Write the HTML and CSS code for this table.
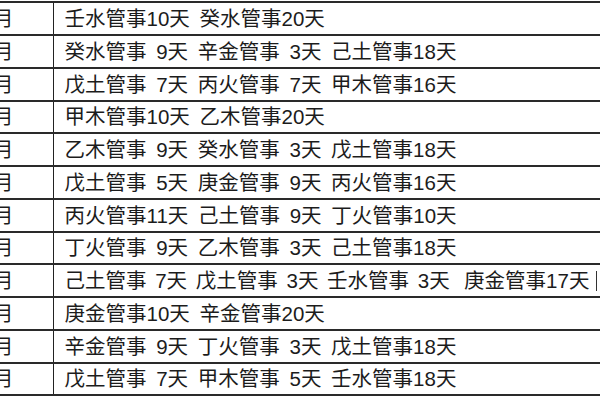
FILE: index.html
```html
<!DOCTYPE html>
<html lang="zh">
<head>
<meta charset="utf-8">
<link rel="stylesheet" href="styles.css">
</head>
<body>
<table class="grid">
  <tr class="r33"><td class="m">子月</td><td class="d">壬水管事10天 癸水管事20天</td></tr>
  <tr class="r33"><td class="m">丑月</td><td class="d">癸水管事 9天 辛金管事 3天 己土管事18天</td></tr>
  <tr class="r33"><td class="m">寅月</td><td class="d">戊土管事 7天 丙火管事 7天 甲木管事16天</td></tr>
  <tr class="r32"><td class="m">卯月</td><td class="d">甲木管事10天 乙木管事20天</td></tr>
  <tr class="r33"><td class="m">辰月</td><td class="d">乙木管事 9天 癸水管事 3天 戊土管事18天</td></tr>
  <tr class="r33"><td class="m">巳月</td><td class="d">戊土管事 5天 庚金管事 9天 丙火管事16天</td></tr>
  <tr class="r33"><td class="m">午月</td><td class="d">丙火管事11天 己土管事 9天 丁火管事10天</td></tr>
  <tr class="r32"><td class="m">未月</td><td class="d">丁火管事 9天 乙木管事 3天 己土管事18天</td></tr>
  <tr class="r33"><td class="m">申月</td><td class="d tight">己土管事 7天 戊土管事 3天 壬水管事 3天&nbsp; <span class="last">庚金管事17天</span></td></tr>
  <tr class="r33"><td class="m">酉月</td><td class="d">庚金管事10天 辛金管事20天</td></tr>
  <tr class="r33"><td class="m">戌月</td><td class="d">辛金管事 9天 丁火管事 3天 戊土管事18天</td></tr>
  <tr class="r32"><td class="m">亥月</td><td class="d">戊土管事 7天 甲木管事 5天 壬水管事18天</td></tr>
</table>
</body>
</html>
```
FILE: styles.css
```css
html, body {
  margin: 0;
  padding: 0;
  background: #ffffff;
  overflow: hidden;
  width: 600px;
  height: 400px;
}
.grid {
  border-collapse: collapse;
  margin-top: 1px;
  margin-left: -60px;
  width: 720px;
  font-family: "Liberation Sans", "Noto Sans CJK SC", sans-serif;
  font-size: 20.5px;
  color: #1c1c1c;
  white-space: pre;
}
.grid td {
  border-top: 2px solid #2a2a2a;
  border-bottom: 2px solid #2a2a2a;
  padding: 0;
  line-height: 20px;
  vertical-align: middle;
}
.r33 { height: 33px; }
.r32 { height: 32px; }
.m {
  width: 113px;
  box-sizing: border-box;
  text-align: right;
  padding-right: 39px !important;
  border-right: 1px solid #222;
}
.d {
  padding-left: 11px !important;
  word-spacing: 4px;
}
.d.tight {
  word-spacing: 3px;
}
.last {
  display: inline-block;
  margin-left: -3px;
  padding-right: 7px;
  border-right: 1px solid #333;
}
```
